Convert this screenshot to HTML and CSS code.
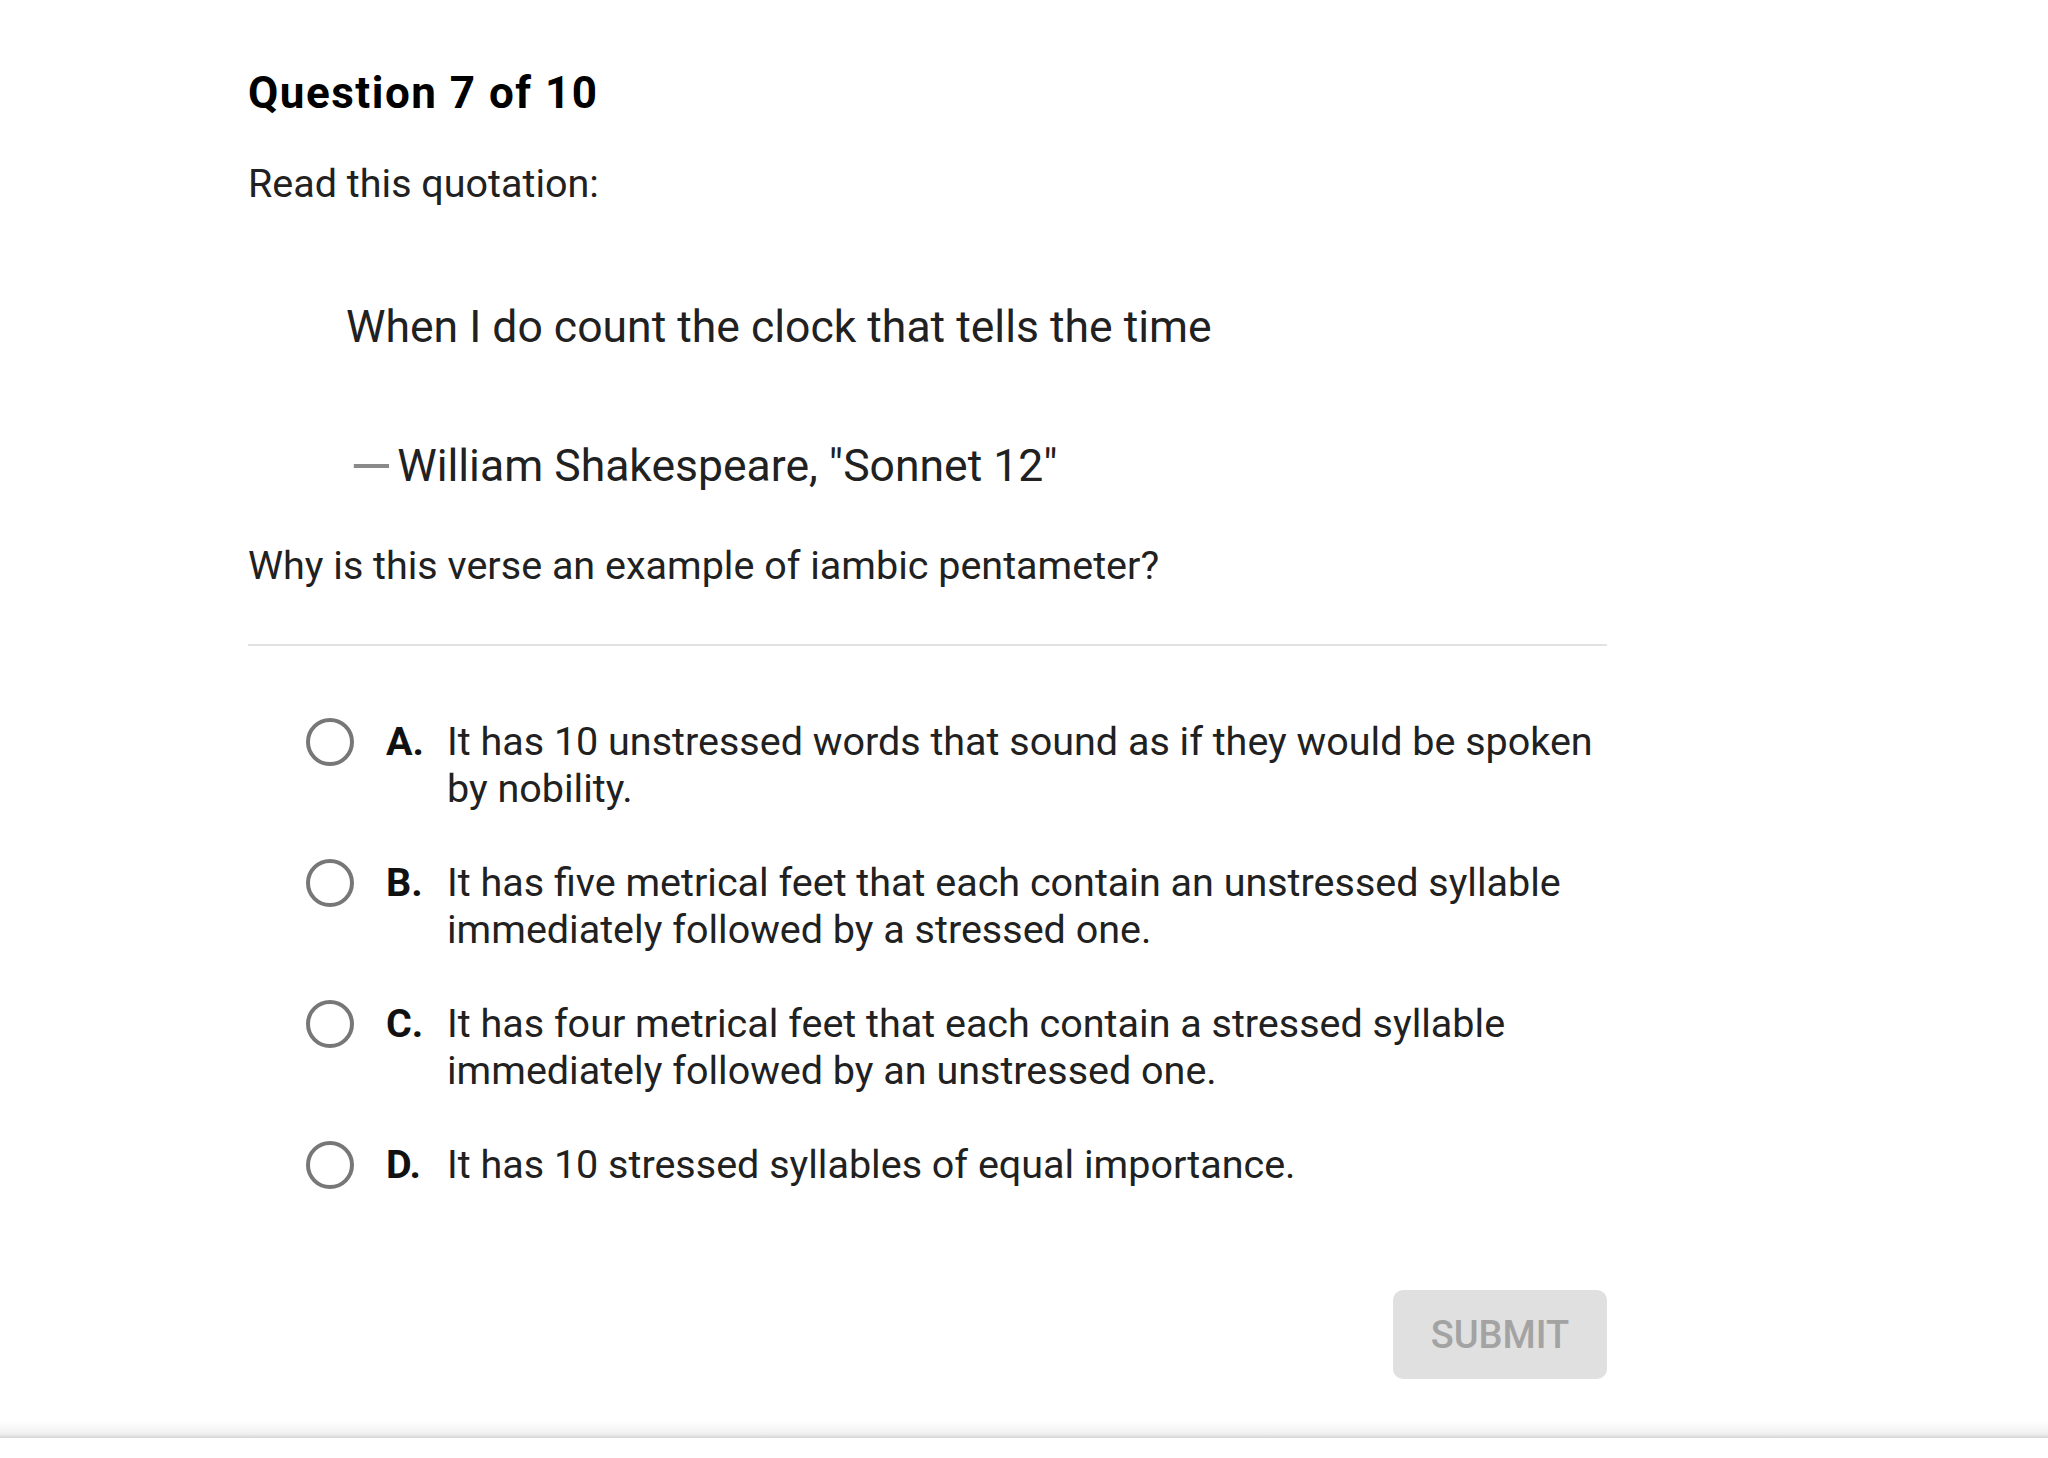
FILE: index.html
```html
<!DOCTYPE html>
<html lang="en">
<head>
<meta charset="utf-8">
<title>Question 7 of 10</title>
<link rel="stylesheet" href="styles.css">
</head>
<body>
<main class="page">
  <h1 class="title">Question 7 of 10</h1>
  <p class="prompt">Read this quotation:</p>
  <blockquote class="quote">
    <p class="quote-line">When I do count the clock that tells the time</p>
    <p class="quote-cite"><span class="dash">—</span>William Shakespeare, "Sonnet 12"</p>
  </blockquote>
  <p class="question">Why is this verse an example of iambic pentameter?</p>
  <hr class="divider">
  <ul class="options">
    <li class="option"><span class="radio"></span><span class="letter">A.</span><span class="text">It has 10 unstressed words that sound as if they would be spoken by nobility.</span></li>
    <li class="option"><span class="radio"></span><span class="letter">B.</span><span class="text">It has five metrical feet that each contain an unstressed syllable immediately followed by a stressed one.</span></li>
    <li class="option"><span class="radio"></span><span class="letter">C.</span><span class="text">It has four metrical feet that each contain a stressed syllable immediately followed by an unstressed one.</span></li>
    <li class="option"><span class="radio"></span><span class="letter">D.</span><span class="text">It has 10 stressed syllables of equal importance.</span></li>
  </ul>
  <div class="actions">
    <button class="submit" type="button" disabled>SUBMIT</button>
  </div>
</main>
<div class="bottom-edge"></div>
</body>
</html>
```
FILE: styles.css
```css
html, body {
  margin: 0;
  padding: 0;
  background: #ffffff;
}
body {
  font-family: Roboto, "Noto Sans", "Liberation Sans", sans-serif;
  color: #212121;
  width: 2048px;
  height: 1458px;
  overflow: hidden;
}
.page {
  width: 1359px;
  margin-left: 248px;
  padding-top: 67px;
}
.title {
  margin: 0;
  font-size: 44px;
  line-height: 52px;
  font-weight: 700;
  letter-spacing: 1.5px;
  color: #000000;
}
.prompt {
  margin: 41px 0 0;
  font-size: 39.5px;
  line-height: 48px;
}
.quote {
  margin: 93px 0 0 98px;
  padding: 0;
}
.quote-line {
  margin: 0;
  font-size: 44.5px;
  line-height: 52px;
}
.quote-cite {
  margin: 87px 0 0;
  font-size: 44.5px;
  line-height: 52px;
}
.dash {
  display: inline-block;
  font-size: 54px;
  line-height: 52px;
  color: #8a8a8a;
  margin-left: 4px;
  margin-right: 5px;
  vertical-align: top;
  transform: translateY(1px);
}
.question {
  margin: 50px 0 0;
  font-size: 39.5px;
  line-height: 48px;
}
.divider {
  margin: 54px 0 0;
  border: 0;
  height: 2px;
  background: #e2e2e2;
}
.options {
  list-style: none;
  margin: 72px 0 0;
  padding: 0 0 0 58px;
  display: flex;
  flex-direction: column;
  gap: 47px;
}
.option {
  display: flex;
  align-items: flex-start;
  font-size: 39.5px;
  line-height: 47px;
}
.radio {
  flex: none;
  box-sizing: border-box;
  width: 48px;
  height: 48px;
  border: 4px solid #777777;
  border-radius: 50%;
  margin-right: 32px;
}
.letter {
  flex: none;
  width: 61px;
  font-weight: 700;
  color: #111111;
}
.text {
  flex: 1;
}
.actions {
  display: flex;
  justify-content: flex-end;
  margin-top: 101px;
}
.submit {
  width: 214px;
  height: 89px;
  border: 0;
  border-radius: 10px;
  background: #e0e0e0;
  color: #a3a3a3;
  font-family: Roboto, "Noto Sans", "Liberation Sans", sans-serif;
  font-size: 38px;
  font-weight: 500;
  padding: 0;
}
.bottom-edge {
  margin-top: 42px;
  height: 16px;
  background: linear-gradient(to bottom, #ffffff 0%, #f0f0f0 80%, #dcdcdc 100%);
  border-bottom: 1px solid #d8d8d8;
}
```
